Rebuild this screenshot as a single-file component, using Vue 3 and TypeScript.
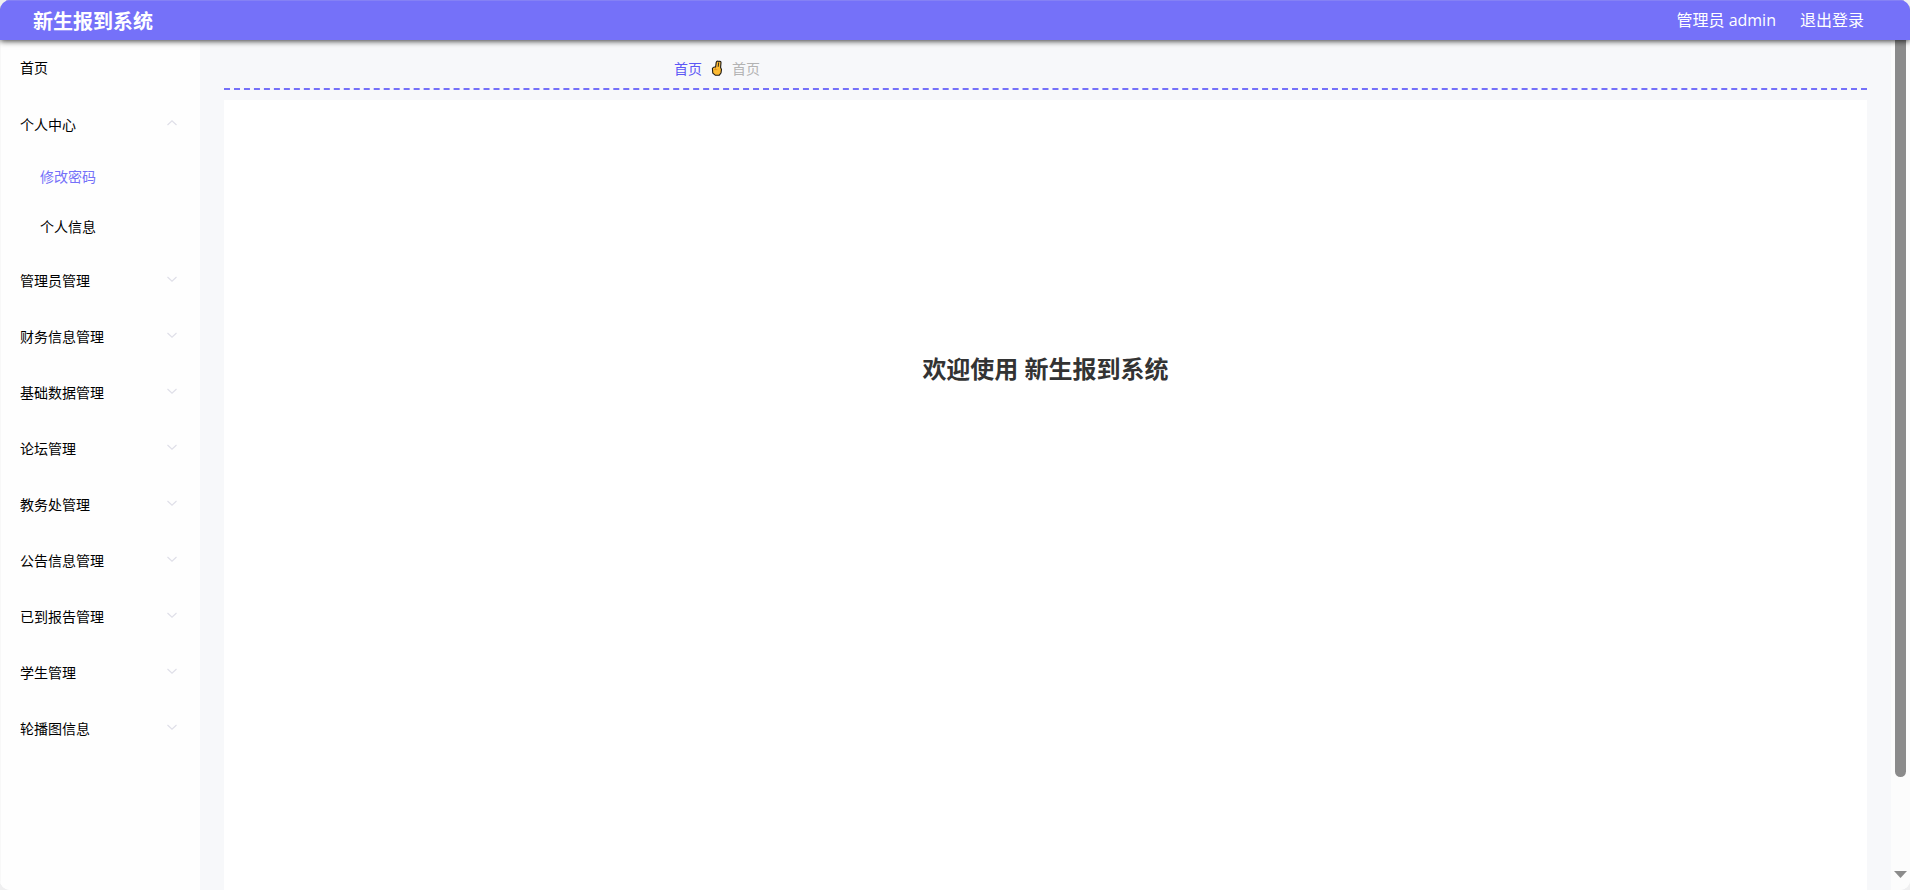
<script setup lang="ts">
import { ref } from 'vue'

interface MenuGroup {
  title: string
  children: string[]
}

const systemName = '新生报到系统'
const groups: MenuGroup[] = [
  { title: '个人中心', children: ['修改密码', '个人信息'] },
  { title: '管理员管理', children: [] },
  { title: '财务信息管理', children: [] },
  { title: '基础数据管理', children: [] },
  { title: '论坛管理', children: [] },
  { title: '教务处管理', children: [] },
  { title: '公告信息管理', children: [] },
  { title: '已到报告管理', children: [] },
  { title: '学生管理', children: [] },
  { title: '轮播图信息', children: [] },
]
const opened = ref('个人中心')
const active = ref('修改密码')

function toggle(title: string): void {
  opened.value = opened.value === title ? '' : title
}
</script>

<template>
  <div class="app">
    <header class="topbar">
      <h1 class="brand">{{ systemName }}</h1>
      <div class="user">
        <span>管理员 admin</span>
        <button type="button" class="logout">退出登录</button>
      </div>
    </header>
    <div class="body">
      <nav class="sidebar">
        <a href="#" class="item home">首页</a>
        <div v-for="g in groups" :key="g.title" class="group">
          <button type="button" class="item" :aria-expanded="opened === g.title" @click="toggle(g.title)">
            <span>{{ g.title }}</span>
            <svg class="arrow" :class="{ up: opened === g.title }" viewBox="0 0 12 12" aria-hidden="true">
              <path d="M1.5 4 6 8.2 10.5 4" />
            </svg>
          </button>
          <div v-if="opened === g.title && g.children.length" class="sub">
            <a
              v-for="c in g.children"
              :key="c"
              href="#"
              class="subitem"
              :class="{ active: active === c }"
              @click.prevent="active = c"
            >{{ c }}</a>
          </div>
        </div>
      </nav>
      <main class="content">
        <nav class="crumbs" aria-label="面包屑">
          <a href="#" class="crumb">首页</a>
          <svg class="hand" viewBox="0 0 12 16" aria-hidden="true">
            <path
              d="M4.6 7.2 5.2 2.4Q5.6.9 7 1.2L8.2 1.4Q9.9 1 10 2.6L9.6 7.4 10.5 9.4 10 13 8.3 15.2H4.2L1.8 13.2 1.4 8.4Q2.4 6.6 4.6 7.2Z"
              fill="#fdbb33" stroke="#1d1a16" stroke-width="1.1" stroke-linejoin="round"
            />
            <path d="M7.7 2.4 7.2 6.8" fill="none" stroke="#1d1a16" stroke-width=".9" />
            <path d="M3 9.6h3.4M4.5 7.6v2" fill="none" stroke="#d98a1c" stroke-width=".7" />
          </svg>
          <span class="current">首页</span>
        </nav>
        <section class="panel">
          <h2 class="welcome">欢迎使用 {{ systemName }}</h2>
        </section>
      </main>
      <div class="scrollbar" aria-hidden="true">
        <div class="thumb"></div>
        <svg class="down" viewBox="0 0 13 7"><path d="M0 0h13L6.5 7Z" /></svg>
      </div>
    </div>
  </div>
</template>

<style>
body {
  background: #efeff0;
}
</style>

<style scoped>
.app {
  box-sizing: border-box;
  height: 100vh;
  display: flex;
  flex-direction: column;
  overflow: hidden;
  border-radius: 10px;
  background: #fff;
  color: #000;
  font-family: "Open Sans", "Noto Sans CJK SC", sans-serif;
  font-size: 14px;
}
a {
  color: inherit;
  text-decoration: none;
}
button {
  border: 0;
  padding: 0;
  background: none;
  color: inherit;
  font: inherit;
  cursor: pointer;
}
.topbar {
  position: relative;
  z-index: 1;
  flex: none;
  display: flex;
  align-items: center;
  justify-content: space-between;
  height: 40px;
  padding: 0 46px 0 33px;
  box-sizing: border-box;
  background: #7571f9;
  border-top: 1px solid #8581f5;
  box-shadow: 0 1px 6px rgba(0, 0, 0, 0.8);
  color: #fff;
}
.brand {
  margin: 0;
  font-size: 20px;
  font-weight: 700;
}
.user {
  display: flex;
  gap: 24px;
  padding-bottom: 3px;
  font-size: 16px;
}
.body {
  flex: 1;
  min-height: 0;
  display: flex;
}
.sidebar {
  flex: none;
  width: 200px;
  box-sizing: border-box;
  border-left: 1px solid #f8f8f8;
  background: #fefefe;
}
.item {
  display: flex;
  align-items: center;
  justify-content: space-between;
  width: 100%;
  height: 56px;
  box-sizing: border-box;
  padding: 0 22px 0 19px;
}
.home {
  padding-bottom: 2px;
}
.arrow {
  width: 12px;
  height: 12px;
  margin-bottom: 3px;
  fill: none;
  stroke: #dfdfe8;
  stroke-width: 1.2;
}
.arrow.up {
  transform: rotate(180deg);
}
.subitem {
  display: flex;
  align-items: center;
  height: 50px;
  box-sizing: border-box;
  padding: 0 0 2px 39px;
}
.active {
  color: #7571f9;
}
.content {
  flex: 1;
  min-width: 0;
  display: flex;
  flex-direction: column;
  gap: 10px;
  padding: 0 24px;
  background: #f7f8fa;
}
.crumbs {
  flex: none;
  display: flex;
  align-items: center;
  gap: 9px;
  height: 50px;
  box-sizing: border-box;
  padding: 8px 0 0 450px;
  border-bottom: 2px dashed #7571f9;
}
.crumb {
  color: #5d57f5;
}
.hand {
  width: 12px;
  height: 16px;
}
.current {
  color: #b3b3b3;
}
.panel {
  flex: 1;
  background: #fff;
}
.welcome {
  margin: 251px 0 0;
  text-align: center;
  font-size: 24px;
  line-height: 36px;
  font-weight: 700;
  color: #333;
}
.scrollbar {
  flex: none;
  display: flex;
  flex-direction: column;
  align-items: center;
  justify-content: space-between;
  width: 19px;
  box-sizing: border-box;
  padding-bottom: 12px;
  background: #fcfcfc;
}
.thumb {
  width: 11px;
  height: 88%;
  border-radius: 0 0 6px 6px;
  background: #8b8b8b;
}
.down {
  width: 13px;
  height: 7px;
  fill: #8b8b8b;
}
</style>
